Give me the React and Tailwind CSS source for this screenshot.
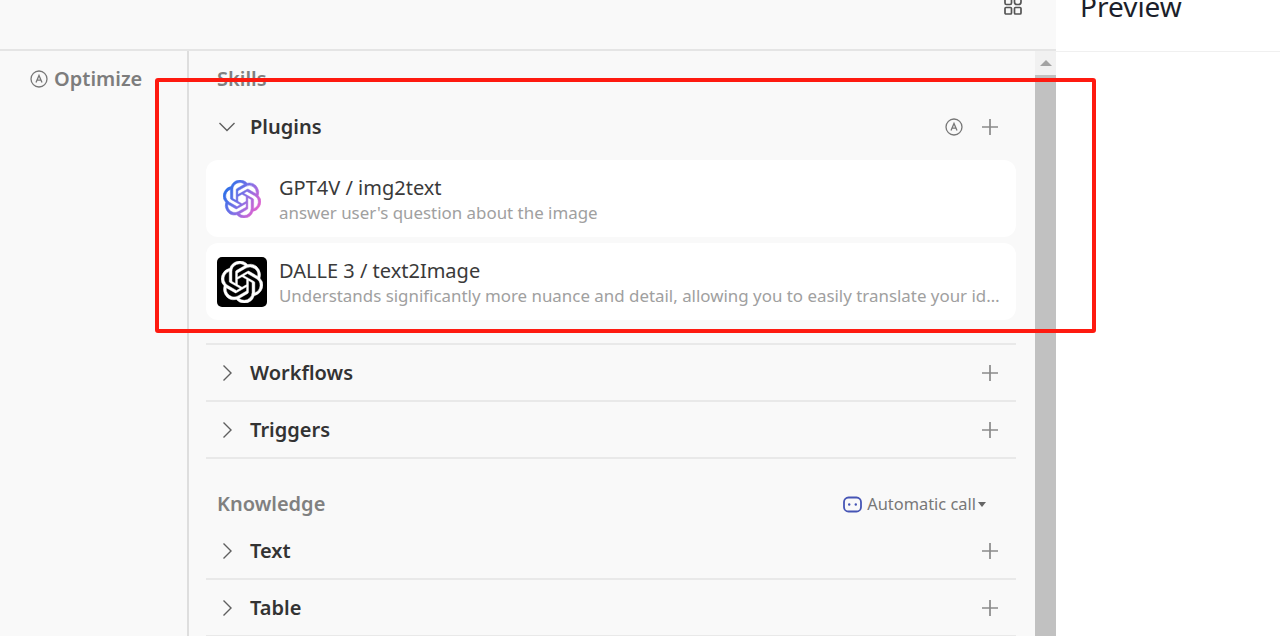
import React from "react";

const OPENAI =
  "M22.2819 9.8211a5.9847 5.9847 0 0 0-.5157-4.9108 6.0462 6.0462 0 0 0-6.5098-2.9A6.0651 6.0651 0 0 0 4.9807 4.1818a5.9847 5.9847 0 0 0-3.9977 2.9 6.0462 6.0462 0 0 0 .7427 7.0966 5.98 5.98 0 0 0 .511 4.9107 6.051 6.051 0 0 0 6.5146 2.9001A5.9847 5.9847 0 0 0 13.2599 24a6.0557 6.0557 0 0 0 5.7718-4.2058 5.9894 5.9894 0 0 0 3.9977-2.9001 6.0557 6.0557 0 0 0-.7475-7.0729zm-9.022 12.6081a4.4755 4.4755 0 0 1-2.8764-1.0408l.1419-.0804 4.7783-2.7582a.7948.7948 0 0 0 .3927-.6813v-6.7369l2.02 1.1686a.071.071 0 0 1 .038.052v5.5826a4.504 4.504 0 0 1-4.4945 4.4944zm-9.6607-4.1254a4.4708 4.4708 0 0 1-.5346-3.0137l.142.0852 4.783 2.7582a.7712.7712 0 0 0 .7806 0l5.8428-3.3685v2.3324a.0804.0804 0 0 1-.0332.0615L9.74 19.9502a4.4992 4.4992 0 0 1-6.1408-1.6464zM2.3408 7.8956a4.485 4.485 0 0 1 2.3655-1.9728V11.6a.7664.7664 0 0 0 .3879.6765l5.8144 3.3543-2.0201 1.1685a.0757.0757 0 0 1-.071 0l-4.8303-2.7865A4.504 4.504 0 0 1 2.3408 7.872zm16.5963 3.8558L13.1038 8.364 15.1192 7.2a.0757.0757 0 0 1 .071 0l4.8303 2.7913a4.4944 4.4944 0 0 1-.6765 8.1042v-5.6772a.79.79 0 0 0-.407-.667zm2.0107-3.0231l-.142-.0852-4.7735-2.7818a.7759.7759 0 0 0-.7854 0L9.409 9.2297V6.8974a.0662.0662 0 0 1 .0284-.0615l4.8303-2.7866a4.4992 4.4992 0 0 1 6.6802 4.66zM8.3065 12.863l-2.02-1.1638a.0804.0804 0 0 1-.038-.0567V6.0742a4.4992 4.4992 0 0 1 7.3757-3.4537l-.142.0805L8.704 5.459a.7948.7948 0 0 0-.3927.6813zm1.0976-2.3654l2.602-1.4998 2.6069 1.4998v2.9994l-2.5974 1.4997-2.6067-1.4997Z";

const Chevron = ({ open }) => (
  <svg width="18" height="18" viewBox="0 0 18 18" fill="none" stroke="#5f5f5f" strokeWidth="1.4" className="shrink-0">
    {open ? <path d="M1.5 5l7.5 7.5L16.5 5" /> : <path d="M5.5 1.5L13 9l-7.5 7.5" />}
  </svg>
);

const Plus = () => (
  <svg width="18" height="18" viewBox="0 0 18 18" fill="none" stroke="#8a8a8a" strokeWidth="1.7" className="shrink-0">
    <path d="M9 1v16M1 9h16" />
  </svg>
);

const AutoIcon = () => (
  <svg width="18" height="18" viewBox="0 0 18 18" fill="none" stroke="#777777" strokeWidth="1.3" className="shrink-0">
    <circle cx="9" cy="9" r="8" />
    <path d="M6 12.5L9 5.5l3 7M7.4 10.2h3.2" />
  </svg>
);

const BotIcon = () => (
  <svg width="19" height="17" viewBox="0 0 19 17" fill="none" className="shrink-0">
    <rect x="1" y="1.5" width="17" height="14" rx="4.5" stroke="#4655b5" strokeWidth="1.8" />
    <circle cx="6.2" cy="8.5" r="1.2" fill="#4655b5" />
    <circle cx="12.8" cy="8.5" r="1.2" fill="#4655b5" />
  </svg>
);

const GridIcon = () => (
  <svg width="18" height="18" viewBox="0 0 18 18" fill="none" stroke="#555555" strokeWidth="1.7" className="shrink-0">
    <rect x="1" y="1" width="6.5" height="6.5" rx="1.5" />
    <rect x="10.5" y="1" width="6.5" height="6.5" rx="2.5" />
    <rect x="1" y="10.5" width="6.5" height="6.5" rx="1" />
    <rect x="10.5" y="10.5" width="6.5" height="6.5" rx="1" />
  </svg>
);

const GradientLogo = () => (
  <svg width="38" height="38" viewBox="0 0 24 24">
    <defs>
      <linearGradient id="gptGrad" x1="0" y1="0.2" x2="1" y2="0.8">
        <stop offset="0" stopColor="#1f6fe8" />
        <stop offset="0.5" stopColor="#7f70e6" />
        <stop offset="1" stopColor="#f060cc" />
      </linearGradient>
    </defs>
    <path d={OPENAI} fill="url(#gptGrad)" stroke="url(#gptGrad)" strokeWidth="0.3" />
  </svg>
);

const DalleLogo = () => (
  <div className="flex h-[50px] w-[50px] items-center justify-center rounded-[5px] bg-black">
    <svg width="42" height="42" viewBox="0 0 24 24">
      <path d={OPENAI} fill="#ffffff" stroke="#ffffff" strokeWidth="0.25" />
    </svg>
  </div>
);

const Row = ({ title, open, auto, height = "h-[57px]" }) => (
  <div className={`flex items-center pl-[12px] pr-[17px] ${height} ${open ? "" : "border-b-2 border-[#e9e9e9]"}`}>
    <Chevron open={open} />
    <span className="ml-[14px] text-[20px] font-semibold text-[#333333]">{title}</span>
    <div className="ml-auto flex items-center gap-[18px]">
      {auto && <AutoIcon />}
      <Plus />
    </div>
  </div>
);

const PluginCard = ({ logo, title, desc }) => (
  <div className="flex h-[77px] items-center rounded-[12px] bg-white pl-[11px] pr-[10px]">
    <div className="flex w-[50px] shrink-0 items-center justify-center">{logo}</div>
    <div className="ml-[12px] min-w-0 flex-1 pt-[2px]">
      <div className="text-[20px] leading-[26px] text-[#3a3a3a]">{title}</div>
      <div className="truncate text-[16.9px] leading-[24px] text-[#a0a0a0]">{desc}</div>
    </div>
  </div>
);

export default function App() {
  return (
    <div className="relative flex h-[636px] w-[1280px] overflow-hidden bg-white font-['Noto_Sans','Open_Sans',sans-serif]">
      <div className="flex w-[1056px] shrink-0 flex-col bg-[#f9f9f9]">
        <div className="flex h-[51px] shrink-0 items-start justify-end overflow-hidden border-b-2 border-[#e5e5e5] pr-[34px]">
          <div className="-mt-[3px]">
            <GridIcon />
          </div>
        </div>
        <div className="flex min-h-0 flex-1">
          <aside className="w-[189px] shrink-0 border-r-2 border-[#dedede] pl-[30px] pt-[16px]">
            <div className="flex h-[24px] items-center gap-[6px] text-[20px] font-semibold text-[#7d7d7d]">
              <AutoIcon />
              <span>Optimize</span>
            </div>
          </aside>
          <main className="min-w-0 flex-1 overflow-hidden pl-[17px] pr-[19px] pt-[16px]">
            <div className="flex h-[24px] items-center pl-[11px] text-[20px] font-semibold text-[#808080]">Skills</div>
            <div className="mt-[8px]">
              <Row title="Plugins" open auto height="h-[56px]" />
            </div>
            <div className="mt-[5px] flex flex-col gap-[6px] border-b-2 border-[#e9e9e9] pb-[23px]">
              <PluginCard
                logo={<GradientLogo />}
                title="GPT4V / img2text"
                desc="answer user's question about the image"
              />
              <PluginCard
                logo={<DalleLogo />}
                title="DALLE 3 / text2Image"
                desc="Understands significantly more nuance and detail, allowing you to easily translate your ideas into exceptionally accurate images"
              />
            </div>
            <Row title="Workflows" />
            <Row title="Triggers" />
            <div className="mt-[33px] flex h-[24px] items-center justify-between pl-[11px] pr-[30px]">
              <span className="text-[20px] font-semibold text-[#808080]">Knowledge</span>
              <span className="flex items-center text-[16.4px] text-[#777777]">
                <BotIcon />
                <span className="ml-[5px]">Automatic call</span>
                <span className="ml-[2px] h-0 w-0 border-x-[4.5px] border-t-[5px] border-x-transparent border-t-[#666666]" />
              </span>
            </div>
            <div className="mt-[7px]">
              <Row title="Text" />
            </div>
            <Row title="Table" />
          </main>
          <div className="flex w-[21px] shrink-0 flex-col">
            <div className="flex h-[24px] items-center justify-center bg-[#f1f1f1]">
              <span className="h-0 w-0 border-x-[6px] border-b-[6px] border-x-transparent border-b-[#a3a3a3]" />
            </div>
            <div className="flex-1 bg-[#c1c1c1]" />
          </div>
        </div>
      </div>
      <div className="flex-1">
        <div className="flex h-[52px] items-start overflow-hidden border-b border-[#f0f0f0] pl-[24px]">
          <span className="-mt-[13px] text-[28px] leading-[38px] text-[#1c1f2b]">Preview</span>
        </div>
      </div>
      {/* red annotation box */}
      <div className="pointer-events-none absolute left-[155px] top-[78px] h-[255px] w-[941px] rounded-[3px] border-[4px] border-[#fe1a10]" />
    </div>
  );
}
